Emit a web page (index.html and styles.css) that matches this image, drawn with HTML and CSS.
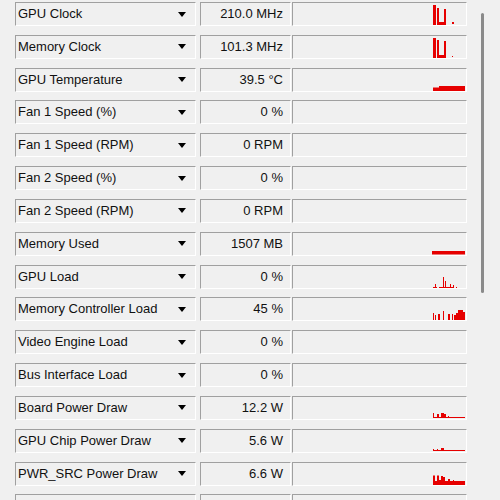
FILE: index.html
```html
<!DOCTYPE html>
<html>
<head>
<meta charset="utf-8">
<link rel="stylesheet" href="styles.css">
</head>
<body>
<div class="panel">
  <div class="list">
    <div class="row">
      <div class="label"><span>GPU Clock</span><svg class="arrow" width="8" height="5" viewBox="0 0 8 5"><polygon points="0,0 8,0 4,5"/></svg></div>
      <div class="value">210.0 MHz</div>
      <div class="graph"><svg width="172" height="22" viewBox="0 0 172 22"><path d="M140 2h3v20h-3zM144 5h2v17h-2zM151 6h2v16h-2zM144 19h9v3h-9zM159 19h2v2h-2z"/></svg></div>
    </div>
    <div class="row">
      <div class="label"><span>Memory Clock</span><svg class="arrow" width="8" height="5" viewBox="0 0 8 5"><polygon points="0,0 8,0 4,5"/></svg></div>
      <div class="value">101.3 MHz</div>
      <div class="graph"><svg width="172" height="22" viewBox="0 0 172 22"><path d="M140 2h3v20h-3zM144 4h2v18h-2zM151 5h2v17h-2zM144 19h9v3h-9zM159 20h1v1h-1z"/></svg></div>
    </div>
    <div class="row">
      <div class="label"><span>GPU Temperature</span><svg class="arrow" width="8" height="5" viewBox="0 0 8 5"><polygon points="0,0 8,0 4,5"/></svg></div>
      <div class="value">39.5 °C</div>
      <div class="graph"><svg width="172" height="22" viewBox="0 0 172 22"><path d="M140 18.5h6v3.5h-6zM146 17h26v5h-26z"/></svg></div>
    </div>
    <div class="row">
      <div class="label"><span>Fan 1 Speed (%)</span><svg class="arrow" width="8" height="5" viewBox="0 0 8 5"><polygon points="0,0 8,0 4,5"/></svg></div>
      <div class="value">0 %</div>
      <div class="graph"></div>
    </div>
    <div class="row">
      <div class="label"><span>Fan 1 Speed (RPM)</span><svg class="arrow" width="8" height="5" viewBox="0 0 8 5"><polygon points="0,0 8,0 4,5"/></svg></div>
      <div class="value">0 RPM</div>
      <div class="graph"></div>
    </div>
    <div class="row">
      <div class="label"><span>Fan 2 Speed (%)</span><svg class="arrow" width="8" height="5" viewBox="0 0 8 5"><polygon points="0,0 8,0 4,5"/></svg></div>
      <div class="value">0 %</div>
      <div class="graph"></div>
    </div>
    <div class="row">
      <div class="label"><span>Fan 2 Speed (RPM)</span><svg class="arrow" width="8" height="5" viewBox="0 0 8 5"><polygon points="0,0 8,0 4,5"/></svg></div>
      <div class="value">0 RPM</div>
      <div class="graph"></div>
    </div>
    <div class="row">
      <div class="label"><span>Memory Used</span><svg class="arrow" width="8" height="5" viewBox="0 0 8 5"><polygon points="0,0 8,0 4,5"/></svg></div>
      <div class="value">1507 MB</div>
      <div class="graph"><svg width="172" height="22" viewBox="0 0 172 22"><path d="M139 18h33v3.5h-33z"/></svg></div>
    </div>
    <div class="row">
      <div class="label"><span>GPU Load</span><svg class="arrow" width="8" height="5" viewBox="0 0 8 5"><polygon points="0,0 8,0 4,5"/></svg></div>
      <div class="value">0 %</div>
      <div class="graph"><svg width="172" height="22" viewBox="0 0 172 22"><path d="M140 21h4v1h-4zM142 18h1v4h-1zM146 21h15v1h-15zM150 11h1v11h-1zM152 15h1v7h-1zM157 18h1v4h-1zM160 19h1v3h-1zM163 21h1v1h-1z"/></svg></div>
    </div>
    <div class="row">
      <div class="label"><span>Memory Controller Load</span><svg class="arrow" width="8" height="5" viewBox="0 0 8 5"><polygon points="0,0 8,0 4,5"/></svg></div>
      <div class="value">45 %</div>
      <div class="graph"><svg width="172" height="22" viewBox="0 0 172 22"><path d="M140 15h1v7h-1zM142 17h1v5h-1zM145 16h2v6h-2zM150 13h1v9h-1zM155 16h2v6h-2zM159 16h1v6h-1zM161 17h2v5h-2zM163 15h2v7h-2zM165 12h5v10h-5zM170 14h2v8h-2z"/></svg></div>
    </div>
    <div class="row">
      <div class="label"><span>Video Engine Load</span><svg class="arrow" width="8" height="5" viewBox="0 0 8 5"><polygon points="0,0 8,0 4,5"/></svg></div>
      <div class="value">0 %</div>
      <div class="graph"></div>
    </div>
    <div class="row">
      <div class="label"><span>Bus Interface Load</span><svg class="arrow" width="8" height="5" viewBox="0 0 8 5"><polygon points="0,0 8,0 4,5"/></svg></div>
      <div class="value">0 %</div>
      <div class="graph"></div>
    </div>
    <div class="row">
      <div class="label"><span>Board Power Draw</span><svg class="arrow" width="8" height="5" viewBox="0 0 8 5"><polygon points="0,0 8,0 4,5"/></svg></div>
      <div class="value">12.2 W</div>
      <div class="graph"><svg width="172" height="22" viewBox="0 0 172 22"><path d="M140 20h32v1h-32zM140 16h1v5h-1zM144 17h2v4h-2zM148 16h3v5h-3zM151 17h2v4h-2zM155 19h1v2h-1z"/></svg></div>
    </div>
    <div class="row">
      <div class="label"><span>GPU Chip Power Draw</span><svg class="arrow" width="8" height="5" viewBox="0 0 8 5"><polygon points="0,0 8,0 4,5"/></svg></div>
      <div class="value">5.6 W</div>
      <div class="graph"><svg width="172" height="22" viewBox="0 0 172 22"><path d="M140 20h32v1h-32zM140 19h1v2h-1zM144 19h1v2h-1zM148 18h3v3h-3z"/></svg></div>
    </div>
    <div class="row">
      <div class="label"><span>PWR_SRC Power Draw</span><svg class="arrow" width="8" height="5" viewBox="0 0 8 5"><polygon points="0,0 8,0 4,5"/></svg></div>
      <div class="value">6.6 W</div>
      <div class="graph"><svg width="172" height="22" viewBox="0 0 172 22"><path d="M140 12.5h2v9.5h-2zM142 18h2v4h-2zM144 12.5h2v9.5h-2zM146 17h2v5h-2zM148 13h2v9h-2zM150 14h2v8h-2zM152 18h20v4h-20zM155 16h2v2h-2zM160 17h1v1h-1zM165 19h-2z"/></svg></div>
    </div>
    <div class="row">
      <div class="label"><span>&nbsp;</span></div>
      <div class="value"></div>
      <div class="graph"></div>
    </div>
  </div>
  <div class="scrollbar"><div class="thumb"></div></div>
</div>
</body>
</html>
```
FILE: styles.css
```css
html, body {
  margin: 0;
  padding: 0;
  background: #f0f0f0;
  overflow: hidden;
}
body {
  width: 500px;
  height: 500px;
  font-family: "Liberation Sans", Arial, sans-serif;
  font-size: 13px;
  color: #111;
}
.panel {
  display: flex;
  height: 500px;
  overflow: hidden;
}
.list {
  padding: 2px 0 0 15px;
  width: 452px;
  flex: none;
}
.row {
  display: flex;
  height: 32.83px;
}
.label, .value, .graph {
  box-sizing: border-box;
  height: 24px;
  border-top: 1px solid #a0a0a0;
  border-left: 1px solid #a0a0a0;
  border-right: 1px solid #ffffff;
  border-bottom: 1px solid #ffffff;
  background: #f0f0f0;
  line-height: 22px;
  white-space: nowrap;
}
.label {
  width: 181px;
  margin-right: 4px;
  padding-left: 2px;
  padding-right: 9px;
  display: flex;
  align-items: center;
  justify-content: space-between;
}
.arrow {
  fill: #000;
  display: block;
}
.value {
  width: 91px;
  margin-right: 1px;
  text-align: right;
  padding-right: 7px;
}
.graph {
  width: 175px;
}
.graph svg {
  display: block;
  fill: #e60000;
}
.scrollbar {
  flex: 1;
  position: relative;
}
.thumb {
  margin: 13px 0 0 14px;
  width: 3px;
  height: 280px;
  border-radius: 2px;
  background: #8a8a8a;
}
```
